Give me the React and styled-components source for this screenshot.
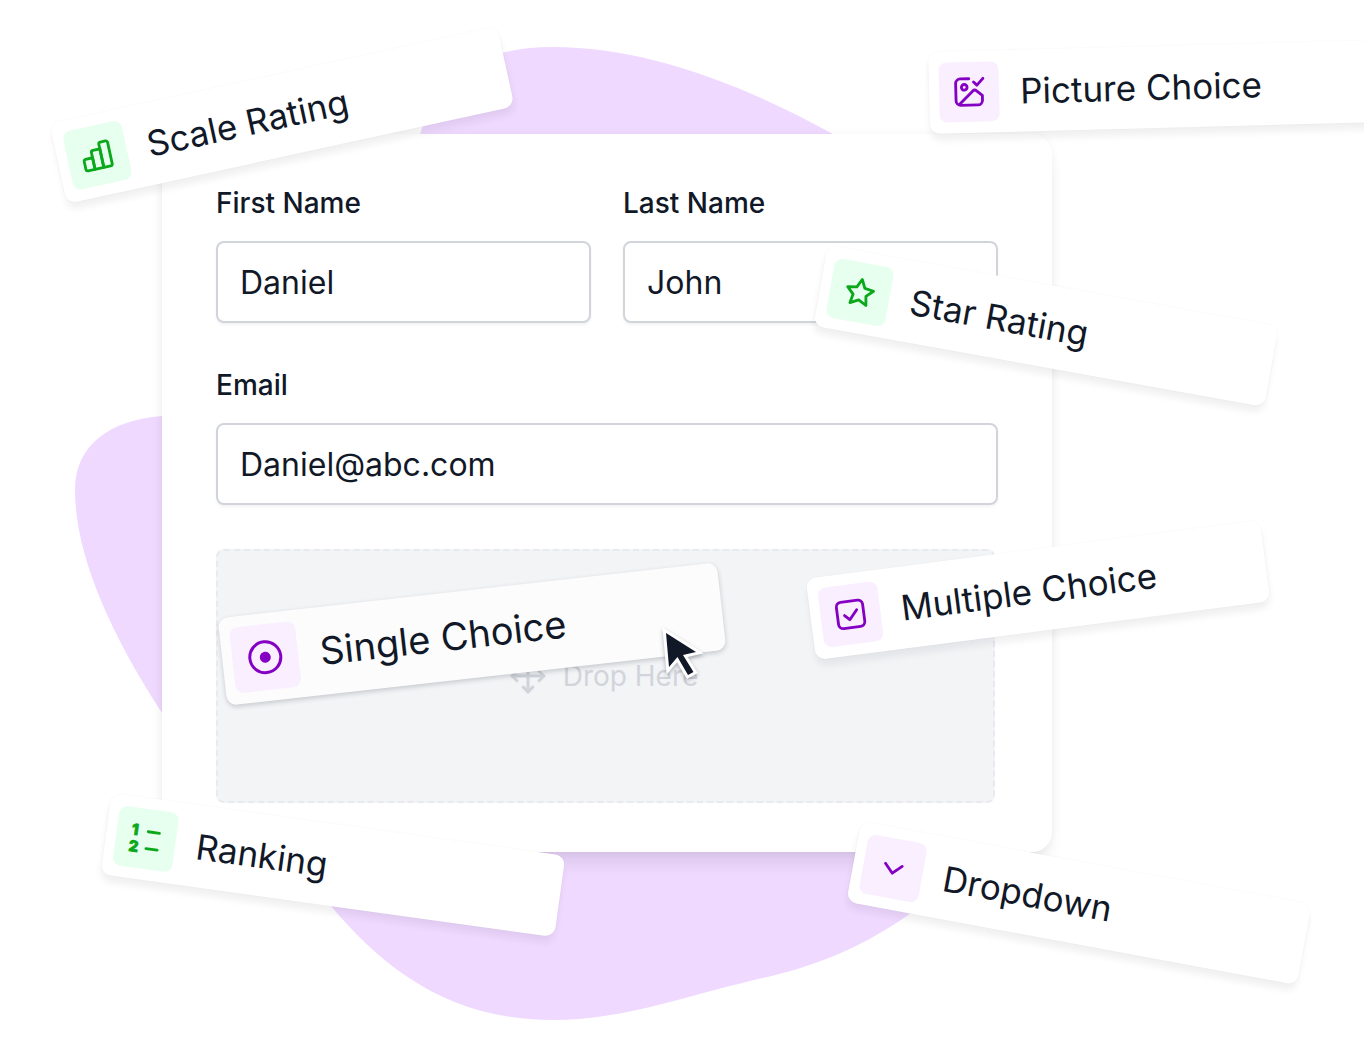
import React from "react"
import styled, { createGlobalStyle, ThemeProvider } from "styled-components"
import { Move } from "lucide-react"

const theme = {
    text: "#111827",
    border: "#d1d5db",
    blob: "#f0d9ff",
    font: `Inter, "Liberation Sans", sans-serif`,
    tones: {
        green: { color: "#0ca81c", background: "#e7ffee" },
        purple: { color: "#8400c2", background: "#faefff" },
    },
}

const GlobalStyle = createGlobalStyle`
    *, *::before, *::after {
        box-sizing: border-box;
    }

    body {
        margin: 0;
        background: #fff;
    }
`

const Stage = styled.main`
    position: relative;
    min-height: 100vh;
    padding: 134px 312px 190px 162px;
    overflow: hidden;
    color: ${props => props.theme.text};
    font-family: ${props => props.theme.font};
`

const Blob = styled.svg`
    position: absolute;
    top: 0;
    left: 0;
    width: 1364px;
    height: 1042px;
    fill: ${props => props.theme.blob};
`

const FormCard = styled.form`
    position: relative;
    display: grid;
    grid-template-columns: 1fr 1fr;
    gap: 44px 32px;
    padding: 51px 54px 49px;
    border-radius: 20px;
    background: #fff;
    box-shadow: 0 0 8px rgba(0, 0, 0, 0.04), 0 14px 18px -6px rgba(17, 24, 39, 0.12);
`

const Field = styled.div`
    display: flex;
    flex-direction: column;
    gap: 20px;
    grid-column: ${props => (props.$wide ? "1 / -1" : "auto")};
`

const Label = styled.label`
    font-size: 28px;
    font-weight: 500;
    line-height: 36px;
`

const Input = styled.input`
    width: 100%;
    height: 82px;
    padding: 0 22px;
    border: 2px solid ${props => props.theme.border};
    border-radius: 8px;
    background: #fff;
    box-shadow: 0 2px 3px rgba(0, 0, 0, 0.05);
    color: inherit;
    font-family: inherit;
    font-size: 32px;
    outline: none;
`

const DropZone = styled.div`
    grid-column: 1 / -1;
    display: flex;
    align-items: center;
    justify-content: center;
    gap: 16px;
    height: 254px;
    margin-right: 3px;
    padding-right: 4px;
    border: 2px dashed #e9eaef;
    border-radius: 8px;
    background: #f3f4f6;
    color: ${props => props.theme.border};
    font-size: 28px;
`

const Chip = styled.div`
    position: absolute;
    top: ${props => props.$top}px;
    left: ${props => props.$left}px;
    display: flex;
    align-items: center;
    gap: ${props => (props.$large ? 22 : 21)}px;
    width: ${props => (props.$large ? 502 : 458)}px;
    height: ${props => (props.$large ? 88 : 82)}px;
    padding: 0 10px;
    border-radius: 10px;
    background: ${props => (props.$large ? "#fcfcfc" : "#fff")};
    box-shadow: ${props => (props.$large
        ? "0 2px 5px rgba(17, 24, 39, 0.2)"
        : "0 0 2px rgba(0, 0, 0, 0.05), 0 7px 7px rgba(17, 24, 39, 0.06)")};
    font-size: ${props => (props.$large ? 38 : 35)}px;
    white-space: nowrap;
    transform: rotate(${props => props.$angle}deg);
`

const Tile = styled.span`
    display: flex;
    align-items: center;
    justify-content: center;
    width: ${props => (props.$large ? 66 : 60)}px;
    height: ${props => (props.$large ? 66 : 60)}px;
    border-radius: 8px;
    background: ${props => props.theme.tones[props.$tone].background};
    color: ${props => props.theme.tones[props.$tone].color};

    svg {
        width: ${props => (props.$large ? 36 : 34)}px;
        height: ${props => (props.$large ? 36 : 34)}px;
    }
`

const Icon = styled.svg`
    fill: none;
    stroke: currentColor;
    stroke-width: 3;
    stroke-linecap: round;
    stroke-linejoin: round;
`

const Digit = styled.text`
    fill: currentColor;
    stroke: currentColor;
    stroke-width: 1;
    font-family: ${props => props.theme.font};
    font-size: 16px;
    font-weight: 800;
`

const Cursor = styled.svg`
    position: absolute;
    top: 620px;
    left: 655px;
    width: 54px;
    height: 66px;
    filter: drop-shadow(0 2px 2px rgba(17, 24, 39, 0.3));
`

const ScaleIcon = () => (
    <Icon viewBox="0 0 36 36">
        <path d="M3 21.500a2 2 0 0 1 2-2h7.500V32H5a2 2 0 0 1-2-2z" />
        <path d="M12.500 32V14a2 2 0 0 1 2-2h7.500v20z" />
        <path d="M22 32V7a2 2 0 0 1 2-2h5.500a2 2 0 0 1 2 2v23a2 2 0 0 1-2 2z" />
    </Icon>
)

const PictureIcon = () => (
    <Icon viewBox="0 0 36 36">
        <path d="M18 4H9a5 5 0 0 0-5 5v18a5 5 0 0 0 5 5h18a5 5 0 0 0 5-5v-5l-6-5a3 3 0 0 0-4 0L7.500 31" />
        <circle cx="13" cy="13" r="3" />
        <path d="M23 7.500l3.500 3.500 6.500-7" />
    </Icon>
)

const StarIcon = () => (
    <Icon viewBox="0 0 36 36">
        <path d="M18 4l4.300 8.700 9.600 1.400-7 6.800 1.700 9.500-8.600-4.500-8.600 4.500 1.700-9.500-7-6.800 9.600-1.400z" />
    </Icon>
)

const CheckIcon = () => (
    <Icon viewBox="0 0 36 36">
        <rect x="4" y="4" width="28" height="28" rx="5" />
        <path d="M11.500 18.500l5 5 8.500-9.500" />
    </Icon>
)

const RadioIcon = () => (
    <Icon viewBox="0 0 36 36">
        <circle cx="18" cy="18" r="15.500" />
        <circle cx="18" cy="18" r="4" fill="currentColor" />
    </Icon>
)

const RankingIcon = () => (
    <Icon viewBox="0 0 36 36">
        <Digit x="2" y="15">1</Digit>
        <Digit x="1" y="33">2</Digit>
        <path d="M19.500 10h12M19.500 28h12" />
    </Icon>
)

const ChevronIcon = () => (
    <Icon viewBox="0 0 36 36">
        <path d="M9 14l9 9 9-9" />
    </Icon>
)

const chips = [
    { label: "Scale Rating", icon: ScaleIcon, tone: "green", left: 53, top: 74, angle: -12.3 },
    { label: "Picture Choice", icon: PictureIcon, tone: "purple", left: 929, top: 46, angle: -1.5 },
    { label: "Star Rating", icon: StarIcon, tone: "green", left: 817, top: 285, angle: 10.2 },
    { label: "Multiple Choice", icon: CheckIcon, tone: "purple", left: 809, top: 549, angle: -7.4 },
    { label: "Single Choice", icon: RadioIcon, tone: "purple", left: 221, top: 590, angle: -6.4, large: true },
    { label: "Ranking", icon: RankingIcon, tone: "green", left: 104, top: 824, angle: 7.9 },
    { label: "Dropdown", icon: ChevronIcon, tone: "purple", left: 850, top: 862, angle: 10.5 },
]

const App = () => {
    return (
        <ThemeProvider theme={theme}>
            <GlobalStyle />
            <Stage>
                <Blob viewBox="0 0 1364 1042" aria-hidden="true">
                    <path d="M553 47C640 47 735 80 833 134C960 204 1040 420 1030 640C1025 780 985 868 911 913C850 956 800 970 750 981C680 998 620 1020 553 1020C450 1020 385 970 330 905C290 860 210 790 162 713C105 625 75 550 75 490C75 445 110 420 162 416C330 400 330 230 420 134C440 75 480 47 553 47Z" />
                </Blob>
                <FormCard>
                    <Field>
                        <Label htmlFor="firstName">First Name</Label>
                        <Input id="firstName" defaultValue="Daniel" />
                    </Field>
                    <Field>
                        <Label htmlFor="lastName">Last Name</Label>
                        <Input id="lastName" defaultValue="John" />
                    </Field>
                    <Field $wide>
                        <Label htmlFor="email">Email</Label>
                        <Input id="email" defaultValue="Daniel@abc.com" />
                    </Field>
                    <DropZone>
                        <Move size={38} strokeWidth={2} />
                        Drop Here
                    </DropZone>
                </FormCard>
                {chips.map(({ label, icon: ChipIcon, tone, left, top, angle, large }) => (
                    <Chip key={label} $left={left} $top={top} $angle={angle} $large={large}>
                        <Tile $tone={tone} $large={large}>
                            <ChipIcon />
                        </Tile>
                        {label}
                    </Chip>
                ))}
                <Cursor viewBox="0 0 54 66" aria-hidden="true">
                    <path
                        d="M11 13L14 47L22.500 37L33 55L38.500 52L28 35L41 32Z"
                        fill="#111827"
                        stroke="#fff"
                        strokeWidth="6"
                        paintOrder="stroke"
                    />
                </Cursor>
            </Stage>
        </ThemeProvider>
    )
}

export default App
